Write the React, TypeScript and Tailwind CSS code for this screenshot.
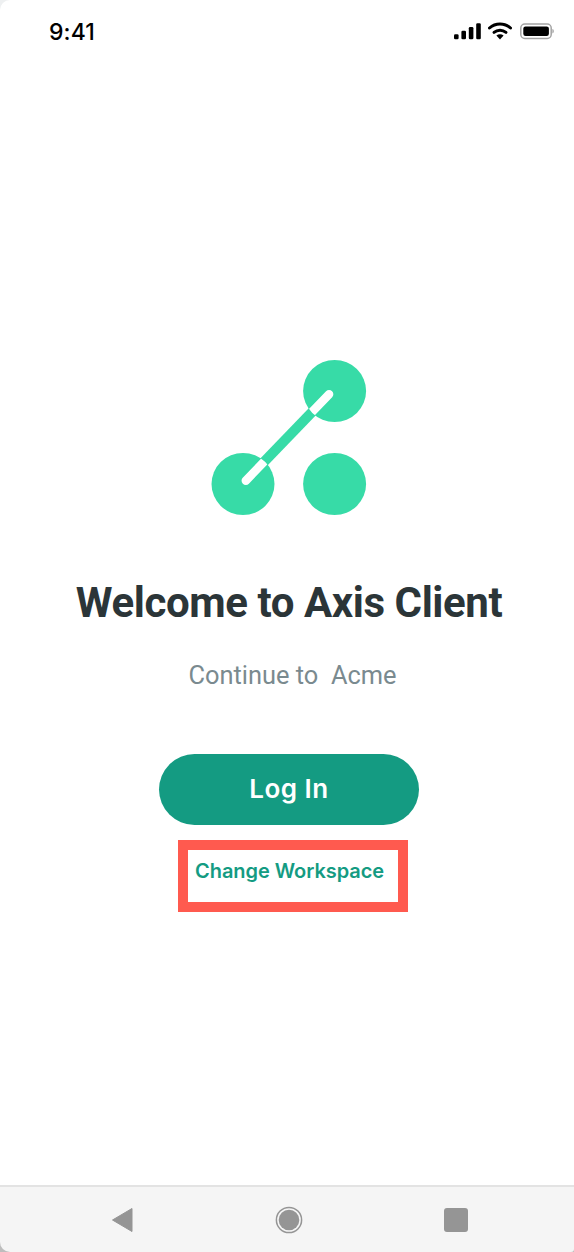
import React from "react";

function Logo() {
  return (
    <svg width="156" height="156" viewBox="0 0 156 156" className="block">
      <defs>
        <clipPath id="logo-dots">
          <ellipse cx="32" cy="124" rx="31.5" ry="31" />
          <ellipse cx="123.6" cy="31" rx="31.5" ry="31" />
        </clipPath>
      </defs>
      <ellipse cx="123.6" cy="31" rx="31.5" ry="31" fill="#37dba7" />
      <ellipse cx="32" cy="124" rx="31.5" ry="31" fill="#37dba7" />
      <ellipse cx="123.6" cy="124" rx="31.5" ry="31" fill="#37dba7" />
      <path d="M36 119.5 L117 35.5" stroke="#37dba7" strokeWidth="10" />
      <path
        d="M34.8 120.7 L118.1 34.3"
        stroke="#fff"
        strokeWidth="8.5"
        strokeLinecap="round"
        clipPath="url(#logo-dots)"
      />
    </svg>
  );
}

function StatusIcons() {
  return (
    <div className="flex items-center gap-[7px]">
      <svg width="27" height="18" viewBox="0 0 27 18">
        <rect x="0" y="12.3" width="4.6" height="5" rx="1.3" fill="#000" />
        <rect x="7.4" y="8.8" width="4.6" height="8.5" rx="1.3" fill="#000" />
        <rect x="14.8" y="5" width="4.6" height="12.3" rx="1.3" fill="#000" />
        <rect x="22.2" y="1.3" width="4.6" height="16" rx="1.3" fill="#000" />
      </svg>
      <svg width="24" height="18" viewBox="0 0 24 18">
        <path d="M1.5 6 C7.5 0.7 16.5 0.7 22.5 6" fill="none" stroke="#000" strokeWidth="3" strokeLinecap="round" />
        <path d="M6 10.3 C9.5 7.4 14.5 7.4 18 10.3" fill="none" stroke="#000" strokeWidth="3" strokeLinecap="round" />
        <path d="M8.4 13.4 L12 17.6 L15.6 13.4 C13.5 11.8 10.5 11.8 8.4 13.4 Z" fill="#000" />
      </svg>
      <svg width="34" height="18" viewBox="0 0 34 18" className="ml-[1px]">
        <rect x="0.8" y="2" width="30.4" height="14.4" rx="4" fill="none" stroke="#a3a3a3" strokeWidth="1.5" />
        <rect x="3.3" y="4.5" width="25.6" height="9.4" rx="2.2" fill="#000" />
        <path d="M32.4 7 C33.4 7.4 33.8 8.2 33.8 9.2 C33.8 10.2 33.4 11 32.4 11.4 Z" fill="#a3a3a3" />
      </svg>
    </div>
  );
}

export default function App() {
  return (
    <div className="h-[1252px] w-[574px] overflow-hidden bg-[#eef0f1] flex flex-col font-['Inter',sans-serif]">
      <div className="flex-1 flex flex-col bg-white rounded-tl-[10px]">
        <div className="h-[60px] shrink-0 pl-[49px] pr-[20px] pt-[18px] flex items-start justify-between">
          <span className="text-[23px] leading-[28px] font-medium text-black tracking-[0.1px]">9:41</span>
          <div className="pt-[4px]">
            <StatusIcons />
          </div>
        </div>

        <main className="flex-1 flex flex-col items-center pt-[300px] pl-[4px]">
          <div className="ml-[-1px]">
            <Logo />
          </div>
          <h1 className="mt-[60px] font-['Roboto',sans-serif] font-bold text-[42px] leading-[54px] text-[#2b3538] tracking-[-0.42px] whitespace-nowrap">
            Welcome to Axis Client
          </h1>
          <p className="mt-[29px] ml-[7px] font-['Roboto',sans-serif] text-[25.4px] leading-[32px] text-[#7a8a8f] whitespace-pre">
            Continue to  Acme
          </p>
          <button className="mt-[63px] w-[260px] h-[71px] pb-[2px] rounded-full bg-[#149b82] text-white text-[26px] font-semibold leading-none tracking-[0.5px]">
            Log In
          </button>
          <div className="mt-[15px] ml-[8px] w-[230px] h-[72px] border-[10px] border-[#ff5a4f] bg-white pl-[7px] pt-[7px] text-[20px] leading-[28px] font-semibold tracking-[-0.05px] text-[#149b82] whitespace-nowrap">
            Change Workspace
          </div>
        </main>
      </div>

      <div className="shrink-0 bg-[#bdbdbd]">
        <nav className="h-[67px] bg-[#f5f5f5] border-t-2 border-[#e3e3e3] rounded-bl-[10px] rounded-br-[3px] flex items-center justify-between pl-[111px] pr-[106px]">
          <svg width="22" height="26" viewBox="0 0 22 26">
            <path d="M21 1.5 L21 24.5 L1.5 13 Z" fill="#959595" stroke="#959595" strokeWidth="1" strokeLinejoin="round" />
          </svg>
          <svg width="28" height="28" viewBox="0 0 28 28">
            <circle cx="14" cy="14" r="12.6" fill="none" stroke="#959595" strokeWidth="1.5" />
            <circle cx="14" cy="14" r="10.3" fill="#959595" />
          </svg>
          <div className="w-[24px] h-[24px] rounded-[3px] bg-[#959595]" />
        </nav>
      </div>
    </div>
  );
}
